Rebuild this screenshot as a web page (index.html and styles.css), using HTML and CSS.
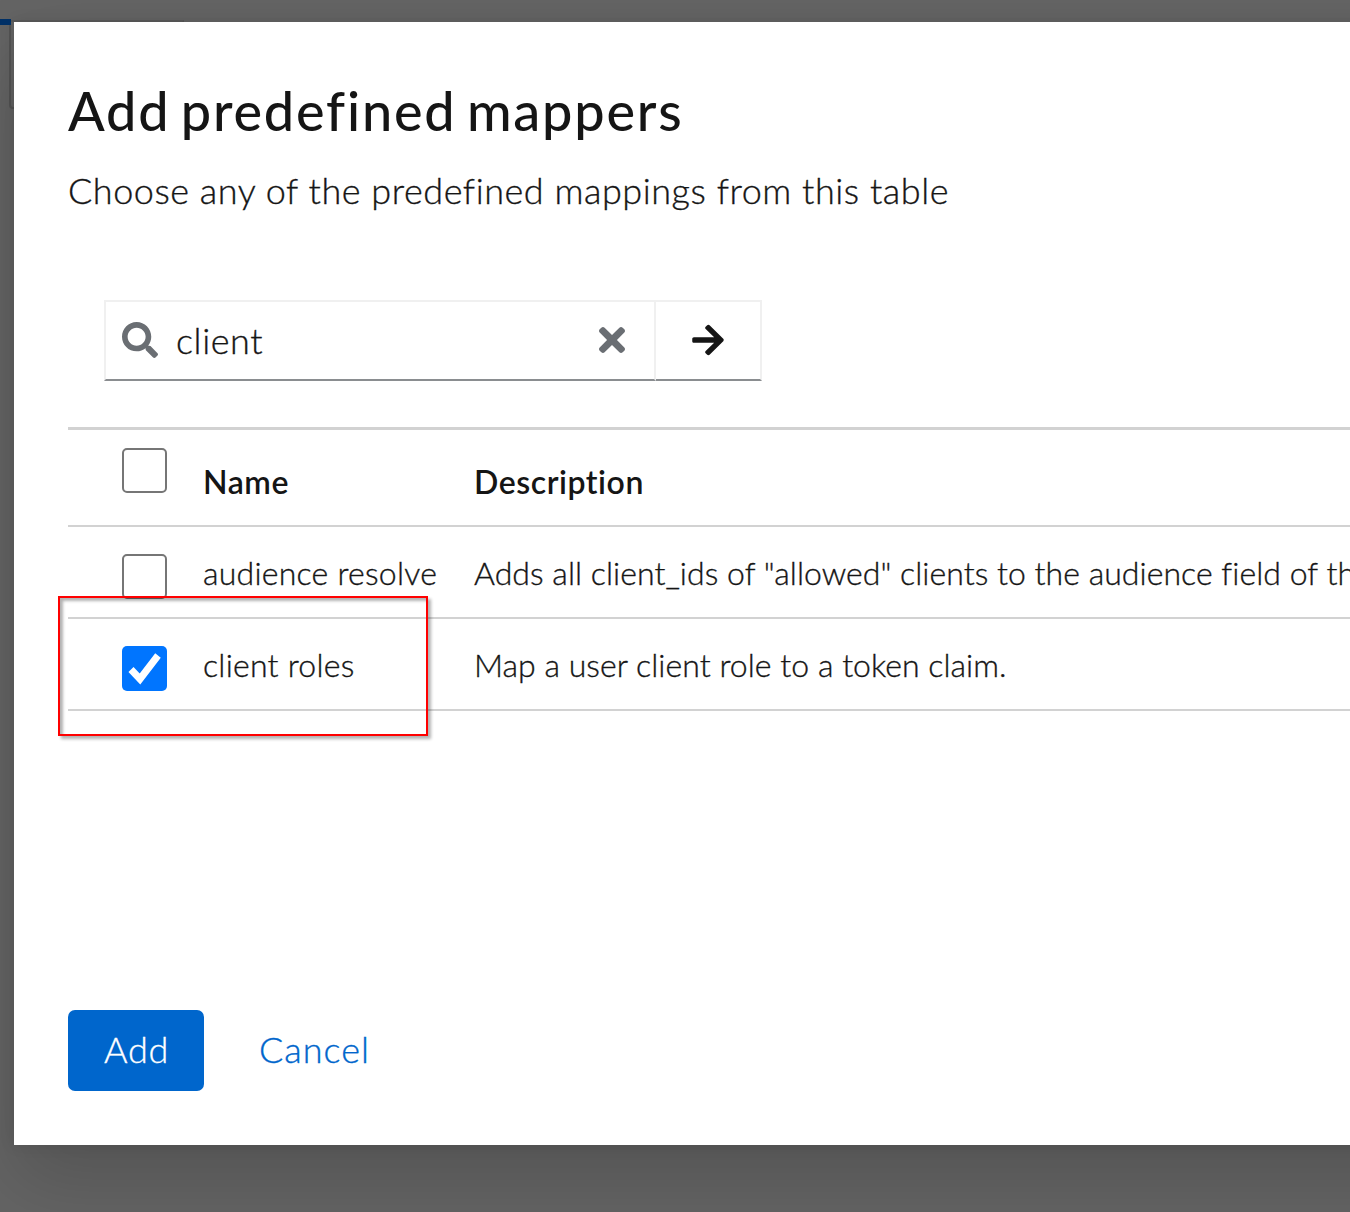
FILE: index.html
```html
<!DOCTYPE html>
<html lang="en">
<head>
<meta charset="utf-8">
<title>Add predefined mappers</title>
<link rel="stylesheet" href="styles.css">
</head>
<body>
<div class="page-behind" aria-hidden="true">
  <div class="tab-accent"></div>
  <div class="panel-outline"></div>
</div>
<main class="modal" role="dialog" aria-labelledby="title">
  <header class="modal-header">
    <h1 class="title" id="title">Add predefined mappers</h1>
    <p class="subtitle">Choose any of the predefined mappings from this table</p>
  </header>
  <div class="search">
    <div class="search-field">
      <svg class="icon-search" viewBox="0 0 512 512"><path d="M505 442.700L405.300 343c-4.500-4.500-10.600-7-17-7H372c27.600-35.300 44-79.700 44-128C416 93.100 322.900 0 208 0S0 93.100 0 208s93.100 208 208 208c48.300 0 92.700-16.400 128-44v16.300c0 6.400 2.500 12.500 7 17l99.700 99.700c9.400 9.400 24.600 9.400 33.900 0l28.300-28.300c9.400-9.400 9.400-24.600.1-34zM208 336c-70.700 0-128-57.200-128-128 0-70.700 57.200-128 128-128 70.700 0 128 57.200 128 128 0 70.700-57.200 128-128 128z"/></svg>
      <span class="search-text">client</span>
      <svg class="icon-clear" viewBox="0 0 352 512"><path d="M242.720 256l100.070-100.070c12.280-12.280 12.280-32.190 0-44.480l-22.240-22.240c-12.280-12.280-32.190-12.280-44.480 0L176 189.280 75.930 89.210c-12.280-12.280-32.190-12.280-44.480 0L9.210 111.450c-12.280 12.280-12.280 32.190 0 44.480L109.280 256 9.210 356.070c-12.280 12.280-12.280 32.190 0 44.480l22.240 22.240c12.280 12.280 32.200 12.280 44.480 0L176 322.720l100.070 100.070c12.280 12.280 32.200 12.280 44.480 0l22.240-22.240c12.280-12.280 12.280-32.190 0-44.480L242.720 256z"/></svg>
    </div>
    <div class="search-go">
      <svg class="icon-arrow" viewBox="0 0 448 512"><path d="M190.500 66.900l22.200-22.200c9.400-9.400 24.600-9.400 33.900 0L441 239c9.400 9.400 9.400 24.600 0 33.900L246.600 467.300c-9.400 9.400-24.600 9.400-33.900 0l-22.200-22.200c-9.500-9.500-9.300-25 .4-34.300L311.400 296H24c-13.300 0-24-10.700-24-24v-32c0-13.300 10.700-24 24-24h287.400L190.900 101.200c-9.800-9.300-10-24.800-.4-34.300z"/></svg>
    </div>
  </div>
  <div class="table">
    <div class="row row-head">
      <span class="check"></span>
      <span class="cell">Name</span>
      <span class="cell">Description</span>
    </div>
    <div class="row">
      <span class="check"></span>
      <span class="cell">audience resolve</span>
      <span class="cell cell-desc">Adds all client_ids of "allowed" clients to the audience field of the</span>
    </div>
    <div class="row">
      <span class="check checked"><svg viewBox="0 0 45 45"><path d="M9 23.500L18 33L36 9.500"/></svg></span>
      <span class="cell">client roles</span>
      <span class="cell cell-desc">Map a user client role to a token claim.</span>
    </div>
    <div class="highlight"></div>
  </div>
  <footer class="actions">
    <span class="btn-add">Add</span>
    <span class="btn-cancel">Cancel</span>
  </footer>
</main>
</body>
</html>
```
FILE: styles.css
```css
* { box-sizing: border-box; }

body {
  margin: 0;
  height: 1212px;
  padding: 22px 0 0 14px;
  overflow: hidden;
  background: #646464;
  color: #151515;
  font-family: Lato, "Open Sans", sans-serif;
  font-weight: 300;
  font-variant-ligatures: none;
  -webkit-text-stroke: .35px currentColor;
}

.page-behind {
  position: absolute;
  left: 0;
  top: 19px;
}

.tab-accent {
  position: relative;
  z-index: 1;
  width: 11px;
  height: 6px;
  background: #003066;
}

.panel-outline {
  width: 175px;
  height: 89px;
  margin: -5px 0 0 9px;
  border: 2px solid #545454;
  border-top-color: #5b5b5b;
  border-radius: 0 0 0 4px;
}

.modal {
  position: relative;
  display: flex;
  flex-direction: column;
  height: 1123px;
  margin-right: -100px;
  padding: 54px 0 54px 54px;
  background: #fff;
  box-shadow: 0 36px 72px rgba(3, 3, 3, .16), 0 0 14px rgba(3, 3, 3, .1);
}

.title {
  margin: 0;
  font-size: 54px;
  font-weight: 500;
  line-height: 70px;
  letter-spacing: 1.8px;
  word-spacing: -5px;
  -webkit-text-stroke: 0;
}

.subtitle {
  margin: 17px 0 1px;
  font-size: 36px;
  line-height: 54px;
  letter-spacing: .53px;
}

.search {
  display: flex;
  width: 658px;
  height: 81px;
  margin: 82px 0 46px 36px;
}

.search-field,
.search-go {
  display: flex;
  align-items: center;
  padding-bottom: 2px;
  border: 2px solid #f0f0f0;
  border-bottom-color: #8a8d90;
}

.search-field {
  width: 552px;
  padding-left: 16px;
}

.search-go {
  flex: 1;
  border-left: 0;
  justify-content: center;
}

.icon-search {
  flex: none;
  width: 36px;
  height: 36px;
  fill: #6a6e73;
}

.search-text {
  flex: none;
  width: 441px;
  padding-left: 18px;
  font-size: 36px;
  line-height: 54px;
  letter-spacing: .6px;
}

.icon-clear {
  flex: none;
  width: 26px;
  height: 38px;
  margin-top: 1px;
  fill: #6a6e73;
}

.icon-arrow {
  width: 32px;
  height: 36px;
  fill: #151515;
}

.table {
  position: relative;
  border-top: 3px solid #d2d2d2;
  font-size: 32px;
  line-height: 48px;
}

.row {
  display: grid;
  grid-template-columns: 135px 271px 1fr;
  height: 92px;
  padding-top: 22px;
  border-bottom: 2px solid #d2d2d2;
  white-space: nowrap;
  letter-spacing: .24px;
}

.row-head {
  height: 97px;
  padding-top: 28px;
  font-weight: 600;
  letter-spacing: .55px;
  -webkit-text-stroke: 0;
}

.cell-desc {
  letter-spacing: .04px;
}

.check {
  width: 45px;
  height: 45px;
  margin: 5px 0 0 54px;
  border: 2px solid #767676;
  border-radius: 5px;
}

.row-head .check {
  margin-top: -10px;
}

.checked {
  border: 0;
  background: #0075ff;
}

.checked svg {
  display: block;
  fill: none;
  stroke: #fff;
  stroke-width: 7;
}

.highlight {
  position: absolute;
  left: -10px;
  top: 166px;
  width: 370px;
  height: 140px;
  border: 2px solid #f00;
  box-shadow: 3px 3px 3px rgba(0, 0, 0, .3), inset 3px 3px 3px rgba(0, 0, 0, .3);
}

.actions {
  display: flex;
  margin-top: auto;
  font-size: 36px;
  line-height: 79px;
}

.btn-add {
  width: 136px;
  height: 81px;
  padding-left: 36px;
  border-radius: 7px;
  background: #06c;
  color: #fff;
  letter-spacing: .7px;
}

.btn-cancel {
  padding-left: 55px;
  color: #06c;
  letter-spacing: 1px;
}
```
